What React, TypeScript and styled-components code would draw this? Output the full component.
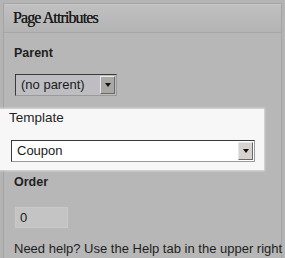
import React from "react";
import styled, { createGlobalStyle } from "styled-components";

const Global = createGlobalStyle`
  html, body { margin: 0; padding: 0; }
  body {
    background: #b4b4b4;
    width: 285px;
    height: 258px;
    overflow: hidden;
    font-family: "Liberation Sans", Arial, sans-serif;
    color: #1e1e1e;
  }
`;

const Panel = styled.div`
  margin: 3px 3px 0 3px;
  border: 1px solid #a4a4a4;
  border-bottom: none;
  background: #b7b7b7;
  height: 260px;
`;

const Header = styled.div`
  height: 28px;
  line-height: 28px;
  padding-left: 9px;
  font-family: "Liberation Serif", "Times New Roman", serif;
  font-size: 16px;
  letter-spacing: -0.9px;
  color: #1c1c1c;
  text-shadow: 0 0 0.4px #1c1c1c;
  background: linear-gradient(#c0c0c0, #b4b4b4);
  border-bottom: 1px solid #a6a6a6;
  box-shadow: inset 0 1px 0 #c8c8c8;
`;

const Body = styled.div`
  padding: 0 10px;
`;

const Label = styled.div<{ $bold?: boolean; $size?: number }>`
  font-size: ${(p) => p.$size ?? 12.5}px;
  font-weight: ${(p) => (p.$bold ? 700 : 400)};
  line-height: 15px;
  color: #1f1f1f;
`;

const Section = styled.div<{ $top: number }>`
  padding-top: ${(p) => p.$top}px;
`;

const Select = styled.div<{ $width: number; $light?: boolean; $indent?: number }>`
  display: flex;
  align-items: stretch;
  width: ${(p) => p.$width}px;
  height: 22px;
  box-sizing: border-box;
  border: 1px solid #3a3a3a;
  border-right-color: #9a9a9a;
  border-bottom-color: #9a9a9a;
  background: ${(p) => (p.$light ? "#ffffff" : "#bdbdc2")};
  margin-left: ${(p) => p.$indent ?? 1}px;
`;

const SelectText = styled.div`
  flex: 1;
  font-size: 13px;
  line-height: 20px;
  padding-left: 5px;
  color: #1a1a1a;
`;

const Arrow = styled.div<{ $light?: boolean }>`
  width: 15px;
  margin: 1px;
  box-sizing: border-box;
  border: 1px solid;
  border-color: #e8e8e8 #6a6a6a #6a6a6a #e8e8e8;
  background: ${(p) => (p.$light ? "#d6d3ce" : "#a9a8a4")};
  display: flex;
  align-items: center;
  justify-content: center;
  &::after {
    content: "";
    border-left: 3.5px solid transparent;
    border-right: 3.5px solid transparent;
    border-top: 4px solid #111;
  }
`;

const Highlight = styled.div`
  margin: 13px 0 0 -14px;
  width: 264px;
  height: 61px;
  box-sizing: border-box;
  background: #f7f7f7;
  padding: 1px 0 0 9px;
  box-shadow: 0 0 2px 1px rgba(255, 255, 255, 0.5);
`;

const Input = styled.div`
  width: 53px;
  height: 21px;
  box-sizing: border-box;
  margin-left: 1px;
  background: #c4c4c4;
  border: 1px solid #cacaca;
  font-size: 13px;
  line-height: 19px;
  padding-left: 4px;
  color: #1a1a1a;
`;

const Help = styled.div`
  font-size: 13px;
  line-height: 15px;
  white-space: nowrap;
  color: #1f1f1f;
  margin-top: 13px;
`;

export default function App() {
  return (
    <>
      <Global />
      <Panel>
        <Header>Page Attributes</Header>
        <Body>
          <Section $top={13}>
            <Label $bold>Parent</Label>
          </Section>
          <Section $top={13}>
            <Select $width={102}>
              <SelectText>(no parent)</SelectText>
              <Arrow />
            </Select>
          </Section>
          <Highlight>
            <Label $size={13.5}>Template</Label>
            <Section $top={15}>
              <Select $width={244} $light $indent={2}>
                <SelectText>Coupon</SelectText>
                <Arrow $light />
              </Select>
            </Section>
          </Highlight>
          <Section $top={5}>
            <Label $bold>Order</Label>
          </Section>
          <Section $top={17}>
            <Input>0</Input>
          </Section>
          <Help>Need help? Use the Help tab in the upper right</Help>
        </Body>
      </Panel>
    </>
  );
}
